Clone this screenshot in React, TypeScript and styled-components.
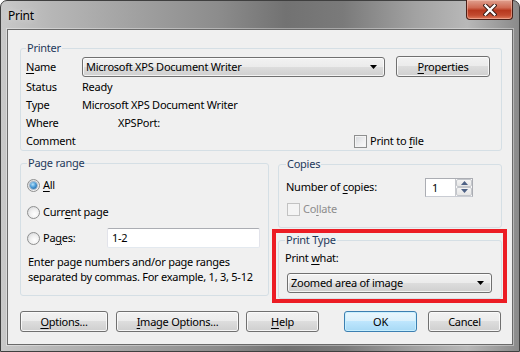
import React from 'react';
import styled, { createGlobalStyle } from 'styled-components';

const GlobalStyle = createGlobalStyle`
  html, body {
    margin: 0;
    padding: 0;
    background: #ffffff;
  }
  body {
    font-family: "Noto Sans", "Open Sans", sans-serif;
    font-size: 11px;
    letter-spacing: -0.25px;
    color: #000;
  }
  * {
    box-sizing: border-box;
  }
`;

const Frame = styled.div`
  width: 520px;
  height: 352px;
  display: flex;
  flex-direction: column;
  padding: 0 6px 6px;
  border: 1px solid #3f3f3f;
  border-radius: 7px 7px 0 0;
  background: linear-gradient(
    90deg,
    #c9c9c9 0%,
    #b6b6b6 10%,
    #8c8c8c 42%,
    #727272 55%,
    #7a7a7a 66%,
    #a2a2a2 80%,
    #b8b8b8 90%,
    #8a8a8a 100%
  );
`;

const TitleBar = styled.div`
  height: 28px;
  display: flex;
  justify-content: space-between;
  align-items: flex-start;
  padding-left: 1px;
`;

const Title = styled.div`
  padding-top: 7px;
  line-height: 16px;
  font-size: 12px;
  color: #000;
  text-shadow: 0 0 6px rgba(255, 255, 255, 0.7);
`;

const CloseButton = styled.div`
  width: 47px;
  height: 20px;
  margin-top: -1px;
  border: 1px solid #4a1f17;
  border-top: none;
  border-radius: 0 0 4px 4px;
  display: flex;
  align-items: center;
  justify-content: center;
  background: linear-gradient(
    180deg,
    #e0a08f 0%,
    #cf6a53 40%,
    #b7381e 55%,
    #c24a2f 80%,
    #de7a5c 100%
  );
  box-shadow: inset 0 0 0 1px rgba(255, 210, 195, 0.45);
`;

const Client = styled.div`
  flex: 1;
  display: flex;
  flex-direction: column;
  background: #f0f0f0;
  border: 1px solid #6a6a6a;
  box-shadow: 0 0 0 1px rgba(255, 255, 255, 0.35);
  padding: 11px 10px 12px 12px;
`;

const Group = styled.fieldset<{ $pl: number; $pr: number; $h?: number }>`
  margin: 0;
  min-width: 0;
  border: 1px solid #d5dfe5;
  border-radius: 3px;
  padding: 0 ${(p) => p.$pr}px 0 ${(p) => p.$pl}px;
  ${(p) => (p.$h ? `height: ${p.$h}px;` : '')}
`;

const Legend = styled.legend`
  padding: 0 1px;
  margin: 0;
  line-height: 14px;
  color: #1e395b;
`;

const Key = styled.span`
  text-decoration: underline;
  text-underline-offset: 2px;
`;

const NameRow = styled.div`
  height: 23px;
  display: flex;
  align-items: center;
`;

const InfoRow = styled.div`
  height: 18px;
  display: flex;
  align-items: center;
`;

const FieldLabel = styled.div<{ $w: number }>`
  width: ${(p) => p.$w}px;
  flex: none;
  line-height: 16px;
`;

const Value = styled.div<{ $indent?: number }>`
  padding-left: ${(p) => p.$indent || 0}px;
  line-height: 16px;
  white-space: nowrap;
`;

const Combo = styled.div<{ $w: number }>`
  width: ${(p) => p.$w}px;
  height: 20px;
  flex: none;
  display: flex;
  align-items: center;
  justify-content: space-between;
  padding: 0 7px 0 3px;
  border: 1px solid #707070;
  border-radius: 3px;
  background: linear-gradient(180deg, #f2f2f2 0%, #ebebeb 50%, #dddddd 50%, #cfcfcf 100%);
  box-shadow: inset 0 0 0 1px rgba(255, 255, 255, 0.75);
  line-height: 16px;
  white-space: nowrap;
`;

const Button = styled.div<{ $w: number; $gap?: number; $default?: boolean }>`
  width: ${(p) => p.$w}px;
  height: 21px;
  flex: none;
  margin-left: ${(p) => p.$gap || 0}px;
  display: flex;
  align-items: center;
  justify-content: center;
  border: 1px solid ${(p) => (p.$default ? '#3c7fb1' : '#707070')};
  border-radius: 3px;
  background: ${(p) =>
    p.$default
      ? 'linear-gradient(180deg, #eaf6fd 0%, #d9f0fc 50%, #bee6fd 50%, #a7d9f5 100%)'
      : 'linear-gradient(180deg, #f2f2f2 0%, #ebebeb 50%, #dddddd 50%, #cfcfcf 100%)'};
  box-shadow: inset 0 0 0 1px ${(p) => (p.$default ? 'rgba(200, 240, 255, 0.9)' : 'rgba(252, 252, 252, 0.85)')};
  line-height: 16px;
  white-space: nowrap;
`;

const CheckItem = styled.div<{ $indent?: number; $disabled?: boolean }>`
  display: flex;
  align-items: center;
  gap: 3px;
  margin-left: ${(p) => p.$indent || 0}px;
  color: ${(p) => (p.$disabled ? '#8d8d8d' : '#000')};
  line-height: 16px;
`;

const CheckBox = styled.div<{ $disabled?: boolean }>`
  width: 13px;
  height: 13px;
  flex: none;
  border: 1px solid ${(p) => (p.$disabled ? '#c2c2c2' : '#8e8f8f')};
  background: ${(p) =>
    p.$disabled ? '#f4f4f4' : 'linear-gradient(135deg, #d4d7db 0%, #f0f0f1 60%, #fbfbfb 100%)'};
  box-shadow: inset 0 0 0 1px #f4f4f4;
`;

const MiddleGrid = styled.div`
  display: grid;
  grid-template-columns: 249px 224px;
  column-gap: 9px;
  margin-top: 5px;
  align-items: start;
`;

const RightColumn = styled.div`
  display: flex;
  flex-direction: column;
  padding-top: 1px;
`;

const RadioRow = styled.div<{ $top: number }>`
  height: 22px;
  margin-top: ${(p) => p.$top}px;
  display: flex;
  align-items: center;
  gap: 3px;
  line-height: 16px;
`;

const Radio = styled.div<{ $checked?: boolean }>`
  width: 13px;
  height: 13px;
  flex: none;
  border-radius: 50%;
  border: 1px solid #8e8f8f;
  background: radial-gradient(circle at 60% 65%, #ffffff 0%, #f0f0f0 45%, #cfd1d4 100%);
  display: flex;
  align-items: center;
  justify-content: center;
  &::after {
    content: '';
    display: ${(p) => (p.$checked ? 'block' : 'none')};
    width: 7px;
    height: 7px;
    border-radius: 50%;
    background: radial-gradient(circle at 40% 35%, #b6e3fb 0%, #4b9bd6 45%, #17548f 100%);
    box-shadow: 0 0 0 1px rgba(30, 80, 130, 0.35);
  }
`;

const PagesInput = styled.div`
  width: 153px;
  height: 20px;
  margin-left: auto;
  display: flex;
  align-items: center;
  padding-left: 4px;
  background: #ffffff;
  border: 1px solid #e2e3ea;
  border-top-color: #abadb3;
  border-bottom-color: #e3e9ef;
  border-radius: 2px;
  line-height: 16px;
`;

const HelpText = styled.div`
  margin-top: 5px;
  padding-left: 1px;
  line-height: 15px;
  white-space: nowrap;
`;

const CopiesRow = styled.div`
  height: 22px;
  display: flex;
  align-items: center;
`;

const Spinner = styled.div`
  width: 48px;
  height: 19px;
  display: flex;
  border: 1px solid #abadb3;
  border-bottom-color: #c9ccd3;
  background: #ffffff;
`;

const SpinField = styled.div`
  flex: 1;
  padding-left: 6px;
  line-height: 17px;
`;

const SpinButtons = styled.div`
  width: 17px;
  display: flex;
  flex-direction: column;
  border-left: 1px solid #c7c9ce;
`;

const SpinButton = styled.div`
  flex: 1;
  display: flex;
  align-items: center;
  justify-content: center;
  background: linear-gradient(180deg, #f4f4f4 0%, #e6e6e6 100%);
  border: 1px solid #c3c6cb;
  border-radius: 2px;
`;

const RedFrame = styled.div`
  margin: 1px -5px 0 -6px;
  border: 4px solid #ec1c24;
  padding: 0 1px 0 2px;
`;

const WhatLabel = styled.div`
  margin-top: 2px;
  height: 18px;
  line-height: 18px;
`;

const WhatCombo = styled(Combo)`
  margin: 6px 0 5px 2px;
`;

const ButtonRow = styled.div`
  display: flex;
  margin-top: 8px;
`;

const Arrow = () => (
  <svg width="7" height="4" viewBox="0 0 7 4">
    <path d="M0 0h7L3.5 4z" fill="#000" />
  </svg>
);

const SpinArrow = ({ up }: { up?: boolean }) => (
  <svg width="7" height="4" viewBox="0 0 7 4">
    <path d={up ? 'M0 4h7L3.5 0z' : 'M0 0h7L3.5 4z'} fill="#4d6185" />
  </svg>
);

export default function App() {
  return (
    <>
      <GlobalStyle />
      <Frame>
        <TitleBar>
          <Title>Print</Title>
          <CloseButton>
            <svg width="14" height="12" viewBox="0 0 14 12">
              <path d="M2.5 1.5L11.5 10.5M11.5 1.5L2.5 10.5" stroke="#3a1c16" strokeWidth="4.2" strokeLinecap="square" />
              <path d="M2.5 1.5L11.5 10.5M11.5 1.5L2.5 10.5" stroke="#ffffff" strokeWidth="2.3" strokeLinecap="square" />
            </svg>
          </CloseButton>
        </TitleBar>
        <Client>
          <Group $pl={5} $pr={11}>
            <Legend>Printer</Legend>
            <NameRow>
              <FieldLabel $w={56}>
                <Key>N</Key>ame
              </FieldLabel>
              <Combo $w={303}>
                <span>Microsoft XPS Document Writer</span>
                <Arrow />
              </Combo>
              <Button $w={94} $gap={11}>
                <Key>P</Key>roperties
              </Button>
            </NameRow>
            <InfoRow>
              <FieldLabel $w={56}>Status</FieldLabel>
              <Value>Ready</Value>
            </InfoRow>
            <InfoRow>
              <FieldLabel $w={56}>Type</FieldLabel>
              <Value>Microsoft XPS Document Writer</Value>
            </InfoRow>
            <InfoRow>
              <FieldLabel $w={56}>Where</FieldLabel>
              <Value $indent={36}>XPSPort:</Value>
            </InfoRow>
            <InfoRow>
              <FieldLabel $w={56}>Comment</FieldLabel>
              <CheckItem $indent={272}>
                <CheckBox />
                <span>
                  Print to <Key>f</Key>ile
                </span>
              </CheckItem>
            </InfoRow>
          </Group>

          <MiddleGrid>
            <Group $pl={6} $pr={8} $h={140}>
              <Legend>Page range</Legend>
              <RadioRow $top={4}>
                <Radio $checked />
                <span>
                  <Key>A</Key>ll
                </span>
              </RadioRow>
              <RadioRow $top={5}>
                <Radio />
                <span>
                  Curr<Key>e</Key>nt page
                </span>
              </RadioRow>
              <RadioRow $top={4}>
                <Radio />
                <span>
                  Pa<Key>g</Key>es:
                </span>
                <PagesInput>1-2</PagesInput>
              </RadioRow>
              <HelpText>
                Enter page numbers and/or page ranges
                <br />
                separated by commas. For example, 1, 3, 5-12
              </HelpText>
            </Group>

            <RightColumn>
              <Group $pl={7} $pr={10}>
                <Legend>Copies</Legend>
                <CopiesRow style={{ marginTop: 5 }}>
                  <FieldLabel $w={139}>
                    Number of <Key>c</Key>opies:
                  </FieldLabel>
                  <Spinner>
                    <SpinField>1</SpinField>
                    <SpinButtons>
                      <SpinButton>
                        <SpinArrow up />
                      </SpinButton>
                      <SpinButton>
                        <SpinArrow />
                      </SpinButton>
                    </SpinButtons>
                  </Spinner>
                </CopiesRow>
                <CopiesRow style={{ marginBottom: 7 }}>
                  <CheckItem $indent={1} $disabled>
                    <CheckBox $disabled />
                    <span>
                      Co<Key>l</Key>late
                    </span>
                  </CheckItem>
                </CopiesRow>
              </Group>

              <RedFrame>
                <Group $pl={6} $pr={10}>
                  <Legend>Print Type</Legend>
                  <WhatLabel>
                    Print <Key>w</Key>hat:
                  </WhatLabel>
                  <WhatCombo $w={205}>
                    <span>Zoomed area of image</span>
                    <Arrow />
                  </WhatCombo>
                </Group>
              </RedFrame>
            </RightColumn>
          </MiddleGrid>

          <ButtonRow>
            <Button $w={88}>
              <Key>O</Key>ptions...
            </Button>
            <Button $w={123} $gap={8}>
              <Key>I</Key>mage Options...
            </Button>
            <Button $w={73} $gap={7}>
              <Key>H</Key>elp
            </Button>
            <Button $w={73} $gap={25} $default>
              OK
            </Button>
            <Button $w={73} $gap={11}>
              Cancel
            </Button>
          </ButtonRow>
        </Client>
      </Frame>
    </>
  );
}
